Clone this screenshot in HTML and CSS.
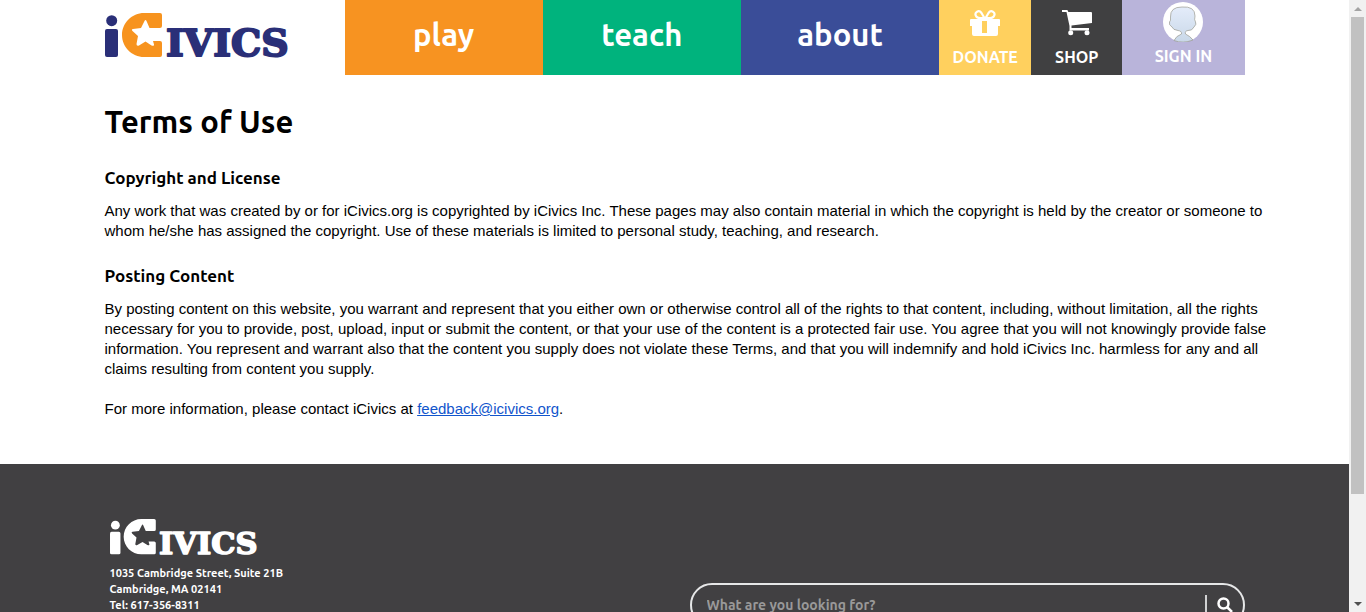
FILE: index.html
```html
<!DOCTYPE html>
<html lang="en">
<head>
<meta charset="utf-8">
<meta name="viewport" content="width=device-width, initial-scale=1">
<title>Terms of Use | iCivics</title>
<link rel="stylesheet" href="styles.css">
</head>
<body>
<div class="window">
  <div class="page">
    <header class="container header">
      <a class="brand" href="#" aria-label="iCivics">
        <svg class="logo" viewBox="0 0 188 45" aria-hidden="true">
          <circle cx="6.700" cy="7.700" r="5.500"/>
          <rect y="16" width="13" height="28" rx="2"/>
          <path class="logo-star" d="M39 0H55Q57 0 57 2V13Q57 15 55 15H44.500L41.500 8Q40.500 6 39.500 8L36 15L28 16Q26 16.500 27.500 18L33 23L31.500 31Q31.500 33.500 34 32.500L40.500 28.500L46.500 32.500Q49.500 33.500 49 31.500L48 28H55Q57 28 57 30V42Q57 44 55 44H39C27 44 17 34 17 22C17 10 27 0 39 0Z"/>
          <text class="logo-word" x="61" y="43">IVICS</text>
        </svg>
      </a>
      <nav class="nav">
        <a class="nav-main play" href="#">play</a>
        <a class="nav-main teach" href="#">teach</a>
        <a class="nav-main about" href="#">about</a>
        <a class="nav-tool donate" href="#">
          <svg class="icon" viewBox="0 0 32 28" aria-hidden="true">
            <path fill="currentColor" d="M2 10H30Q31 10 31 11V17H29V25Q29 27 27 27H5Q3 27 3 25V17H1V11Q1 10 2 10ZM13 12V24H18V12Z"/>
            <path fill="none" stroke="currentColor" stroke-width="2.200" d="M16 10L12.500 4C10 .500 5 3 7 7Q8 9 11 9H21Q24 9 25 7C27 3 22 .500 19.500 4Z"/>
          </svg>
          <span>DONATE</span>
        </a>
        <a class="nav-tool shop" href="#">
          <svg class="icon" viewBox="0 0 32 28" aria-hidden="true">
            <path fill="currentColor" d="M1 1H6Q7 1 7.300 3H30Q31 3 31 4V14L10.500 16.500V19H28V21.500H8.500V17L5.500 3H1Z"/>
            <circle fill="currentColor" cx="9.700" cy="23.700" r="2.500"/><circle fill="currentColor" cx="26" cy="23.700" r="2.500"/>
          </svg>
          <span>SHOP</span>
        </a>
        <a class="nav-tool signin" href="#">
          <svg class="avatar" viewBox="0 0 40 40" aria-hidden="true">
            <defs><linearGradient id="face" x1="0" y1="0" x2="0" y2="1"><stop offset="0" stop-color="#e4ecfa"/><stop offset="1" stop-color="#c9d8e8"/></linearGradient></defs>
            <circle cx="20" cy="20" r="20" fill="#fff"/>
            <path d="M11 38.500Q13 34 18.500 32Q19 29 15 28.500Q10 28 9 25Q5.500 23 6.500 20Q8 19 7.500 15Q7 5 19 5Q32 4 32 14Q31 18 32.500 20Q34 22 31 25Q29 29 25 28.500Q21.500 29 22.500 32Q27 34 30 38Q20 42 11 38.500Z" fill="url(#face)" stroke="#99998f" stroke-width=".7"/>
          </svg>
          <span>SIGN IN</span>
        </a>
      </nav>
    </header>

    <main class="container content">
      <h1>Terms of Use</h1>
      <section>
        <h2>Copyright and License</h2>
        <p>Any work that was created by or for iCivics.org is copyrighted by iCivics Inc. These pages may also contain material in which the copyright is held by the creator or someone to whom he/she has assigned the copyright. Use of these materials is limited to personal study, teaching, and research.</p>
      </section>
      <section>
        <h2>Posting Content</h2>
        <p>By posting content on this website, you warrant and represent that you either own or otherwise control all of the rights to that content, including, without limitation, all the rights necessary for you to provide, post, upload, input or submit the content, or that your use of the content is a protected fair use. You agree that you will not knowingly provide false information. You represent and warrant also that the content you supply does not violate these Terms, and that you will indemnify and hold iCivics Inc. harmless for any and all claims resulting from content you supply.</p>
        <p>For more information, please contact iCivics at <a href="mailto:feedback@icivics.org">feedback@icivics.org</a>.</p>
      </section>
    </main>

    <footer class="footer">
      <div class="container footer-row">
        <div class="footer-brand">
          <svg class="logo logo-light" viewBox="0 0 188 45" aria-hidden="true">
            <circle cx="6.700" cy="7.700" r="5.500"/>
            <rect y="16" width="13" height="28" rx="2"/>
            <path class="logo-star" d="M39 0H55Q57 0 57 2V13Q57 15 55 15H44.500L41.500 8Q40.500 6 39.500 8L36 15L28 16Q26 16.500 27.500 18L33 23L31.500 31Q31.500 33.500 34 32.500L40.500 28.500L46.500 32.500Q49.500 33.500 49 31.500L48 28H55Q57 28 57 30V42Q57 44 55 44H39C27 44 17 34 17 22C17 10 27 0 39 0Z"/>
            <text class="logo-word" x="61" y="43">IVICS</text>
          </svg>
          <address>1035 Cambridge Street, Suite 21B<br>Cambridge, MA 02141<br>Tel: 617-356-8311</address>
        </div>
        <form class="search" role="search">
          <input type="search" placeholder="What are you looking for?" aria-label="Search">
          <button type="submit" aria-label="Submit search">
            <svg viewBox="0 0 16 16" aria-hidden="true"><circle cx="6.500" cy="6.500" r="5"/><path d="M10 10L15 15"/></svg>
          </button>
        </form>
      </div>
    </footer>
  </div>
  <div class="scrollbar" aria-hidden="true">
    <span class="arrow arrow-up"></span>
    <span class="thumb"></span>
    <span class="arrow arrow-down"></span>
  </div>
</div>
</body>
</html>
```

FILE: styles.css
```css
* { box-sizing: border-box; }

body {
  margin: 0;
  background: #fff;
  color: #000;
  font: 15px/20px "Liberation Sans", Arial, sans-serif;
}

.window {
  display: grid;
  grid-template-columns: 1fr 17px;
  height: 100vh;
  overflow: hidden;
}

.page {
  display: flex;
  flex-direction: column;
  min-width: 0;
  overflow: hidden;
}

.container {
  width: 100%;
  max-width: 1140px;
  margin: 0 auto;
}

.header {
  display: grid;
  grid-template-columns: 240px 1fr;
  flex: none;
}

.brand { padding-top: 13px; }

.logo {
  display: block;
  width: 188px;
  overflow: visible;
  fill: #2a2f78;
  stroke: none;
}

.logo-star { fill: #f7931e; }

.logo-word {
  font: bold 38px "DejaVu Serif", serif;
  stroke: #2a2f78;
  stroke-width: 2px;
  stroke-linejoin: round;
}

.nav {
  display: grid;
  grid-template-columns: 198fr 198fr 198fr 92fr 91fr 122fr;
  height: 75px;
}

.nav a {
  color: #fff;
  font-family: Ubuntu, "Noto Sans", sans-serif;
  font-weight: bold;
  text-decoration: none;
}

.nav-main {
  display: flex;
  justify-content: center;
  padding-top: 15px;
  font-size: 31px;
  line-height: 40px;
}

.nav-tool {
  display: flex;
  flex-direction: column;
  align-items: center;
  gap: 10px;
  padding-top: 9px;
  font-size: 16px;
  line-height: 20px;
}

.play { background: #f79321; }
.teach { background: #00b37d; }
.about { background: #3a4d98; }
.donate { background: #ffd05e; }
.shop { background: #404041; }
.nav .signin {
  gap: 4px;
  padding-top: 2px;
  background: #b9b4da;
}

.icon { width: 32px; height: 28px; }
.avatar { width: 40px; height: 40px; }

.content {
  flex: none;
  padding-top: 27px;
  padding-bottom: 25px;
}

h1, h2 {
  margin: 0;
  font-family: Ubuntu, "Noto Sans", sans-serif;
}

h1 {
  margin-bottom: 26px;
  font-size: 31px;
  line-height: 40px;
}

h2 {
  margin-bottom: 13px;
  font-size: 17px;
  line-height: 20px;
}

section { margin-right: -28px; }
section + section { margin-top: 25px; }
p { margin: 0 0 20px; }
p a { color: #1155cc; }

.footer {
  flex: 1 0 auto;
  padding-top: 55px;
  background: #414042;
  color: #fff;
  font-family: Ubuntu, "Noto Sans", sans-serif;
  font-weight: bold;
}

.footer-row {
  display: flex;
  justify-content: space-between;
}

.footer-brand { padding-left: 5px; }

.logo-light {
  width: 151px;
  fill: #fff;
}

.logo-light .logo-star { fill: #fff; }
.logo-light .logo-word { stroke: #fff; }

address {
  margin-top: 10px;
  font-size: 11px;
  font-style: normal;
  line-height: 16px;
}

.search {
  display: flex;
  align-items: center;
  width: 555px;
  height: 44px;
  margin-top: 64px;
  border: 2px solid #e6e7e8;
  border-radius: 22px;
}

.search input {
  flex: 1;
  min-width: 0;
  padding: 0 15px;
  border: 0;
  background: none;
  color: #fff;
  font: bold 14px/20px Ubuntu, "Noto Sans", sans-serif;
}

.search input::placeholder { color: #999; }

.search button {
  width: 38px;
  height: 20px;
  padding: 0 0 0 10px;
  border: 0;
  border-left: 2px solid #d1d2d3;
  background: none;
}

.search svg {
  display: block;
  width: 16px;
  height: 16px;
  fill: none;
  stroke: #fff;
  stroke-width: 2.5;
}

.scrollbar {
  display: flex;
  flex-direction: column;
  align-items: center;
  background: #f1f1f1;
}

.arrow {
  display: flex;
  align-items: center;
  justify-content: center;
  width: 17px;
  height: 17px;
}

.arrow::before {
  content: "";
  border: 4px solid transparent;
}

.arrow-up::before {
  border-top: 0;
  border-bottom-color: #a3a3a3;
}

.arrow-down { margin-top: auto; }

.arrow-down::before {
  border-bottom: 0;
  border-top-color: #505050;
}

.thumb {
  width: 13px;
  height: 78vh;
  background: #c1c1c1;
}
```
